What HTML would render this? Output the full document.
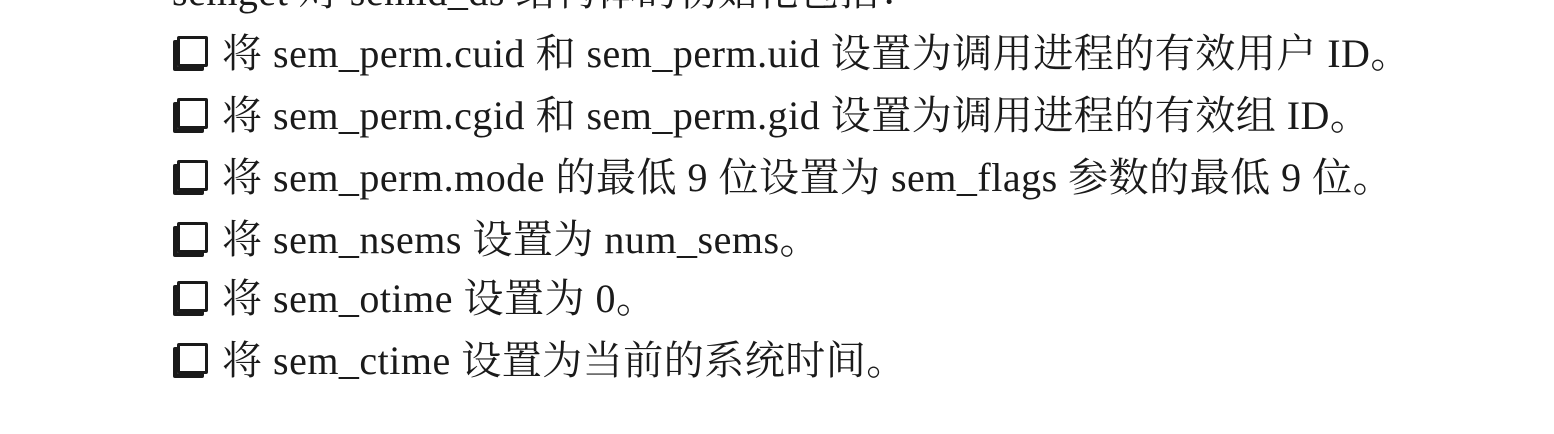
<!DOCTYPE html>
<html><head><meta charset="utf-8"><style>
body{margin:0;width:1554px;height:434px;background:#fff;overflow:hidden;position:relative;font-family:"Liberation Serif","Noto Serif CJK SC",serif;color:#1a1a1a;}
.l{position:absolute;left:222px;font-size:40px;white-space:nowrap;line-height:46px;letter-spacing:0.5px;}
.cb{position:absolute;left:177px;width:25px;height:25px;border:3px solid #1a1a1a;border-radius:2px;box-shadow:-4px 4px 0 #1a1a1a;}
</style></head><body>
<div class="l" style="left:172px;top:-31px">semget 对 semid_ds 结构体的初始化包括：</div>
<div class="cb" style="top:36px"></div><div class="l" style="top:31px">将 sem_perm.cuid 和 sem_perm.uid 设置为调用进程的有效用户 ID。</div>
<div class="cb" style="top:98px"></div><div class="l" style="top:93px">将 sem_perm.cgid 和 sem_perm.gid 设置为调用进程的有效组 ID。</div>
<div class="cb" style="top:160px"></div><div class="l" style="top:155px">将 sem_perm.mode 的最低 9 位设置为 sem_flags 参数的最低 9 位。</div>
<div class="cb" style="top:222px"></div><div class="l" style="top:217px">将 sem_nsems 设置为 num_sems。</div>
<div class="cb" style="top:281px"></div><div class="l" style="top:276px">将 sem_otime 设置为 0。</div>
<div class="cb" style="top:343px"></div><div class="l" style="top:338px">将 sem_ctime 设置为当前的系统时间。</div>
</body></html>
